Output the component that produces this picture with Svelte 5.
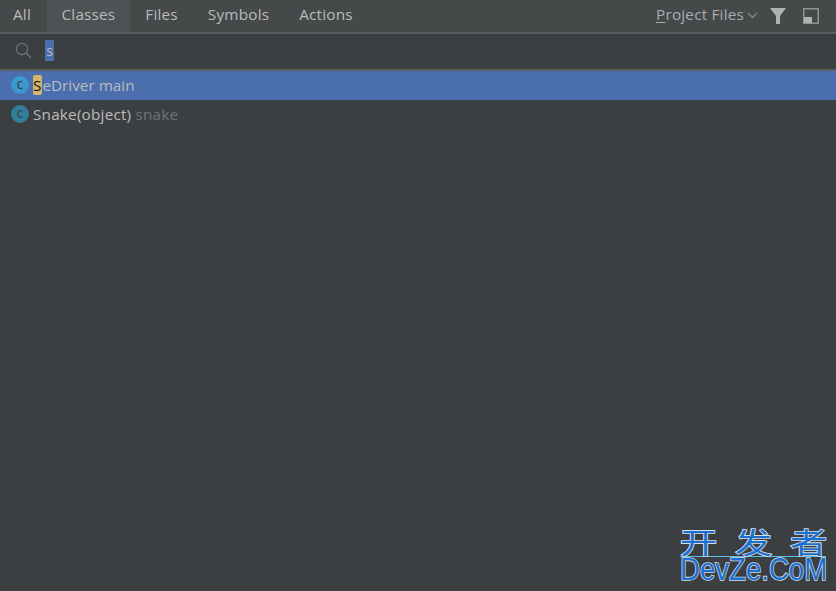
<script>
  const tabs = [
    { label: 'All', active: false },
    { label: 'Classes', active: true },
    { label: 'Files', active: false },
    { label: 'Symbols', active: false },
    { label: 'Actions', active: false }
  ];
</script>

<div class="popup">
  <header class="tabbar">
    <nav class="tabs">
      {#each tabs as t}
        <div class="tab" class:active={t.active}>{t.label}</div>
      {/each}
    </nav>
    <div class="tools">
      <span class="scope"><span class="u">P</span>roject Files</span>
      <svg class="chev" width="11" height="7" viewBox="0 0 11 7"><path d="M1 1l4.5 4.5L10 1" fill="none" stroke="#7f8589" stroke-width="1.4"/></svg>
      <svg class="filter" width="16" height="16" viewBox="0 0 16 16"><path d="M0 0h16L10 8v8H6V8z" fill="#afb1b3"/></svg>
      <svg class="pin" width="16" height="16" viewBox="0 0 16 16"><rect x="0.75" y="0.75" width="14.5" height="14.5" fill="none" stroke="#8f9294" stroke-width="1.5"/><rect x="1" y="9" width="8" height="6" fill="#afb1b3"/></svg>
    </div>
  </header>
  <div class="search">
    <svg width="17" height="17" viewBox="0 0 17 17"><circle cx="7" cy="7" r="5.6" fill="none" stroke="#6e7173" stroke-width="1.2"/><path d="M11 11l5 5" stroke="#6e7173" stroke-width="1.4"/></svg>
    <span class="query">s</span>
  </div>
  <ul class="results">
    <li class="row selected">
      <span class="cls c1">C</span>
      <span class="name"><span class="hit">S</span>eDriver main</span>
    </li>
    <li class="row">
      <span class="cls c2">C</span>
      <span class="name wide">Snake(object) <span class="loc">snake</span></span>
    </li>
  </ul>
  <div class="mark">
    <div class="cn"><span>开</span><span>发</span><span>者</span></div>
    <div class="en">DevZe.CoM</div>
  </div>
</div>

<style>
  :global(body) { margin: 0; background: #3c3f41; }
  .popup {
    position: relative;
    width: 836px;
    height: 591px;
    overflow: hidden;
    background: #3c3f41;
    color: #bbbbbb;
    font-family: "Open Sans", "Noto Sans", sans-serif;
    font-size: 15.3px;
  }
  .tabbar {
    display: flex;
    justify-content: space-between;
    height: 32px;
    background: #45494a;
    border-bottom: 2px solid #5a5d5f;
  }
  .tabs { display: flex; }
  .tab {
    padding: 0 15px;
    line-height: 29px;
    color: #bbbbbb;
    letter-spacing: 0.2px;
  }
  .tab:first-child { padding: 0 15.5px 0 13px; }
  .tab.active { background: #4e5254; }
  .tools { display: flex; align-items: center; padding: 0 17px 3px 0; }
  .scope { color: #a9adb0; margin-top: -1px; letter-spacing: 0.2px; }
  .u { text-decoration: underline; text-underline-offset: 2px; }
  .chev { margin-left: 3px; margin-top: 1px; }
  .filter { margin-left: 12px; margin-top: 2px; }
  .pin { margin-left: 17px; margin-top: 2px; }
  .search {
    display: flex;
    align-items: center;
    height: 35px;
    padding-left: 15px;
    border-bottom: 2px solid #5a5d5f;
  }
  .search svg { margin-bottom: 2px; }
  .query {
    margin: 0 0 2px 13px;
    width: 9px;
    height: 21px;
    line-height: 21px;
    background: #4b6eaf;
    color: #bbbbbb;
    text-align: center;
    font-size: 14px;
  }
  .results { list-style: none; margin: 0; padding: 0; }
  .row {
    display: flex;
    align-items: center;
    height: 29px;
    padding: 0 0 1px 11px;
    box-sizing: border-box;
    color: #bbbbbb;
  }
  .row.selected { background: #4b6eaf; }
  .cls {
    width: 18px;
    height: 18px;
    border-radius: 50%;
    display: flex;
    align-items: center;
    justify-content: center;
    margin-right: 4px;
    font-size: 10px;
    font-weight: 600;
    color: #3c3f41;
  }
  .c1 { background: #3b99d0; }
  .c2 { background: #327f9c; }
  .name { margin-bottom: 1px; }
  .name.wide { letter-spacing: 0.2px; }
  .hit {
    display: inline-block;
    background: #d0b56f;
    color: #111;
    border-radius: 2px;
    line-height: 20px;
    padding-right: 1px;
  }
  .loc { color: #6f7375; }
  .mark {
    position: absolute;
    left: 680px;
    top: 526px;
    width: 146px;
    color: #1a6fd0;
    paint-order: stroke fill;
    -webkit-text-stroke: 1.6px #d4dde3;
  }
  .cn {
    display: flex;
    gap: 26px;
    font-family: "Noto Sans CJK SC", sans-serif;
    font-size: 29px;
    line-height: 30px;
    height: 30px;
    border-bottom: 1px solid #58c0f0;
  }
  .cn span {
    display: block;
    transform: scaleX(1.28);
    transform-origin: left center;
  }
  .en {
    font-family: "Liberation Sans", sans-serif;
    font-size: 31px;
    line-height: 26px;
    white-space: nowrap;
    transform: scaleX(0.89);
    transform-origin: left center;
  }
</style>
